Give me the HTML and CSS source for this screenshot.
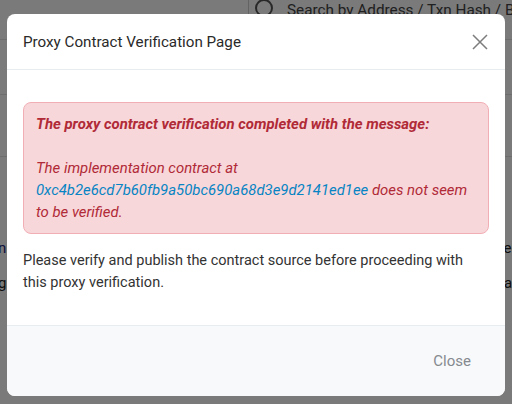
FILE: index.html
```html
<!DOCTYPE html>
<html>
<head>
<meta charset="utf-8">
<link rel="stylesheet" href="styles.css">
</head>
<body>
<div class="page">
  <div class="topbar">
    <div class="search">
      <svg class="search-icon" width="20" height="20" viewBox="0 0 20 20"><circle cx="9" cy="9" r="8" fill="none" stroke="#555" stroke-width="2"/></svg>
      <span class="search-text">Search by Address / Txn Hash / Block / Token</span>
    </div>
  </div>
  <div class="row row-a"></div>
  <div class="row row-b"></div>
  <div class="content">
    <div class="line"><span><span class="navy">n</span> Tracker Proxy</span><span class="right">ed</span></div>
    <div class="line">gr Contract<span class="right">as</span></div>
  </div>
</div>
<div class="overlay">
  <div class="modal">
    <div class="modal-header">
      <h5 class="modal-title">Proxy Contract Verification Page</h5>
      <button class="btn-close" aria-label="Close">
        <svg width="16" height="16" viewBox="0 0 16 16"><path d="M1 1L15 15M15 1L1 15" stroke="#7d7d7d" stroke-width="1.5" fill="none"/></svg>
      </button>
    </div>
    <div class="modal-body">
      <div class="alert">
        <b>The proxy contract verification completed with the message:</b><br><br>The implementation contract at <a class="addr" href="#">0xc4b2e6cd7b60fb9a50bc690a68d3e9d2141ed1ee</a> does not seem to be verified.
      </div>
      <p class="note">Please verify and publish the contract source before proceeding with this proxy verification.</p>
    </div>
    <div class="modal-footer">
      <button class="btn-link">Close</button>
    </div>
  </div>
</div>
</body>
</html>
```
FILE: styles.css
```css
* { box-sizing: border-box; }
html, body { margin: 0; padding: 0; }
body {
  width: 512px;
  height: 404px;
  overflow: hidden;
  font-family: Roboto, "Liberation Sans", sans-serif;
  background: #fff;
  color: #212529;
  position: relative;
}
.page { width: 512px; height: 404px; }
.topbar {
  height: 40px;
  border-bottom: 1px solid #e4e4e4;
  display: flex;
  justify-content: flex-end;
}
.search {
  width: 264px;
  border-left: 1px solid #d0d0d0;
  display: flex;
  align-items: flex-start;
  gap: 12px;
  padding-left: 6px;
  overflow: hidden;
  white-space: nowrap;
}
.search-icon { margin-top: -1px; flex: none; }
.search-text { font-size: 15.3px; color: #444; margin-top: 1px; }
.row { border-bottom: 1px solid #e4e4e4; }
.row-a { height: 55px; }
.row-b { height: 62px; }
.content { padding-top: 80px; }
.line {
  font-size: 15px;
  color: #222;
  white-space: nowrap;
  margin-left: -2px;
  height: 35px;
  line-height: 22px;
  display: flex;
  justify-content: space-between;
  width: 522px;
}
.navy { color: #1a237e; }
.overlay {
  position: absolute;
  inset: 0;
  background: rgba(0, 0, 0, 0.52);
}
.modal {
  margin: 14px 0 0 7px;
  width: 498px;
  height: 382px;
  background: #fff;
  border-radius: 8px;
  display: flex;
  flex-direction: column;
  overflow: hidden;
}
.modal-header {
  height: 56px;
  border-bottom: 1px solid #e9ecef;
  display: flex;
  align-items: center;
  justify-content: space-between;
  padding: 0 17px 0 16px;
  flex: none;
}
.modal-title {
  margin: 0;
  font-size: 15.2px;
  font-weight: 400;
  color: #2a2a2a;
}
.btn-close {
  border: 0;
  background: none;
  padding: 0;
  width: 16px;
  height: 16px;
  display: flex;
}
.modal-body {
  padding: 32px 16px 16px 16px;
  flex: none;
}
.alert {
  background: #f8d7da;
  border: 1px solid #f1aeb5;
  border-radius: 8px;
  padding: 10px 12px;
  color: #b02a37;
  font-style: italic;
  font-size: 14.9px;
  line-height: 22px;
}
.alert b { font-weight: 700; }
.addr { color: #0784c3; text-decoration: none; }
.note {
  margin: 16px 0 15px;
  font-size: 14.5px;
  line-height: 22px;
  color: #333;
}
.modal-footer {
  flex: 1;
  background: #f8f9fa;
  border-top: 1px solid #e9ecef;
  display: flex;
  justify-content: flex-end;
  align-items: center;
  padding: 0 18px;
}
.btn-link {
  border: 0;
  background: none;
  font-family: inherit;
  font-size: 15px;
  color: #858a90;
  padding: 6px 16px;
}
```
